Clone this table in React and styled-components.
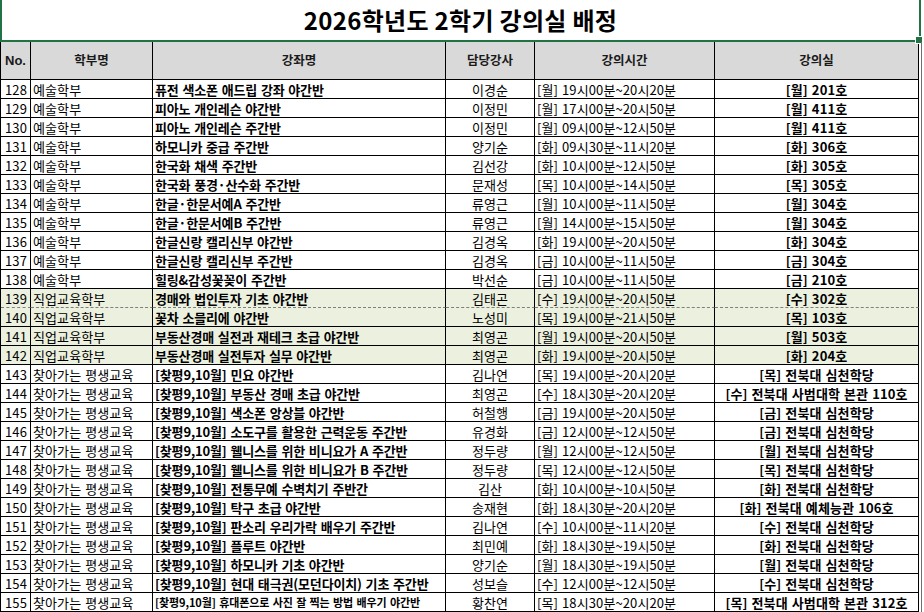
import React from "react";
import styled, { createGlobalStyle } from "styled-components";

const GlobalStyle = createGlobalStyle`
  html, body {
    margin: 0;
    padding: 0;
    background: #ffffff;
  }
  body {
    font-family: "Noto Sans CJK KR", "Noto Sans", sans-serif;
    color: #000000;
  }
`;

// Style
const Sheet = styled.div`
  width: 924px;
  height: 612px;
  overflow: hidden;
  display: flex;
  flex-direction: column;
  position: relative;
  background: #ffffff;
`;

const TitleCell = styled.div`
  width: 921px;
  height: 42px;
  box-sizing: border-box;
  border-left: 2px solid #217346;
  border-right: 2px solid #217346;
  border-bottom: 2px solid #217346;
  display: flex;
  align-items: center;
  justify-content: center;
  position: relative;
`;

const Title = styled.h1`
  margin: 0;
  font-size: 24px;
  font-weight: 700;
  letter-spacing: 0.3px;
  line-height: 1;
`;

const FillHandle = styled.div`
  position: absolute;
  right: -4px;
  bottom: -4px;
  width: 6px;
  height: 6px;
  background: #217346;
  border: 1px solid #ffffff;
`;

const Row = styled.div`
  display: grid;
  grid-template-columns: 30px 122px 293px 89px 180px 204px;
  width: 919px;
  height: ${(p) => (p.$head ? "38px" : "19px")};
  box-sizing: border-box;
  border-left: 1px solid #000000;
  background: ${(p) => (p.$head ? "#d9d9d9" : p.$green ? "#ebf1de" : "#ffffff")};
`;

const Cell = styled.div`
  box-sizing: border-box;
  border-right: 1px solid #000000;
  border-bottom: 1px ${(p) => (p.$dashed ? "dashed #7f7f7f" : "solid #000000")};
  display: flex;
  align-items: center;
  justify-content: ${(p) =>
    p.$align === "right" ? "flex-end" : p.$align === "center" ? "center" : "flex-start"};
  padding: ${(p) => (p.$align === "right" ? "0 3px 0 0" : p.$align === "center" ? "0" : "0 0 0 2px")};
  font-size: 13px;
  font-weight: ${(p) => (p.$bold ? 700 : 400)};
  letter-spacing: 0.1px;
  word-spacing: 1px;
  white-space: nowrap;
  overflow: hidden;
  line-height: 1;
`;

const CourseCell = styled(Cell)`
  font-size: ${(p) => (p.$small ? "11px" : "13px")};
  font-weight: 700;
  letter-spacing: ${(p) => (p.$small ? "-0.1px" : "-0.15px")};
`;

const HeadCell = styled(Cell)`
  font-size: 12.5px;
  font-weight: 700;
  letter-spacing: 0;
  color: #1a1a1a;
`;

const NoLabel = styled.span`
  font-family: "Liberation Sans", Arial, sans-serif;
  font-size: 13px;
`;

const RightEdge = styled.div`
  position: absolute;
  left: 921px;
  top: 42px;
  width: 1px;
  bottom: 0;
  background: #6f6f6f;
`;

const data = [
  [128, "예술학부", "퓨전 색소폰 애드립 강좌 야간반", "이경순", "[월] 19시00분~20시20분", "[월] 201호"],
  [129, "예술학부", "피아노 개인레슨 야간반", "이정민", "[월] 17시00분~20시50분", "[월] 411호"],
  [130, "예술학부", "피아노 개인레슨 주간반", "이정민", "[월] 09시00분~12시50분", "[월] 411호"],
  [131, "예술학부", "하모니카 중급 주간반", "양기순", "[화] 09시30분~11시20분", "[화] 306호"],
  [132, "예술학부", "한국화 채색 주간반", "김선강", "[화] 10시00분~12시50분", "[화] 305호"],
  [133, "예술학부", "한국화 풍경·산수화 주간반", "문재성", "[목] 10시00분~14시50분", "[목] 305호"],
  [134, "예술학부", "한글·한문서예A 주간반", "류영근", "[월] 10시00분~11시50분", "[월] 304호"],
  [135, "예술학부", "한글·한문서예B 주간반", "류영근", "[월] 14시00분~15시50분", "[월] 304호"],
  [136, "예술학부", "한글신랑 캘리신부 야간반", "김경옥", "[화] 19시00분~20시50분", "[화] 304호"],
  [137, "예술학부", "한글신랑 캘리신부 주간반", "김경옥", "[금] 10시00분~11시50분", "[금] 304호"],
  [138, "예술학부", "힐링&감성꽃꽂이 주간반", "박선순", "[금] 10시00분~11시50분", "[금] 210호"],
  [139, "직업교육학부", "경매와 법인투자 기초 야간반", "김태곤", "[수] 19시00분~20시50분", "[수] 302호"],
  [140, "직업교육학부", "꽃차 소믈리에 야간반", "노성미", "[목] 19시00분~21시50분", "[목] 103호"],
  [141, "직업교육학부", "부동산경매 실전과 재테크 초급 야간반", "최영곤", "[월] 19시00분~20시50분", "[월] 503호"],
  [142, "직업교육학부", "부동산경매 실전투자 실무 야간반", "최영곤", "[화] 19시00분~20시50분", "[화] 204호"],
  [143, "찾아가는 평생교육", "[찾평9,10월] 민요 야간반", "김나연", "[목] 19시00분~20시20분", "[목] 전북대 심천학당"],
  [144, "찾아가는 평생교육", "[찾평9,10월] 부동산 경매 초급 야간반", "최영곤", "[수] 18시30분~20시20분", "[수] 전북대 사범대학 본관 110호"],
  [145, "찾아가는 평생교육", "[찾평9,10월] 색소폰 앙상블 야간반", "허철행", "[금] 19시00분~20시50분", "[금] 전북대 심천학당"],
  [146, "찾아가는 평생교육", "[찾평9,10월] 소도구를 활용한 근력운동 주간반", "유경화", "[금] 12시00분~12시50분", "[금] 전북대 심천학당"],
  [147, "찾아가는 평생교육", "[찾평9,10월] 웰니스를 위한 비니요가 A 주간반", "정두량", "[월] 12시00분~12시50분", "[월] 전북대 심천학당"],
  [148, "찾아가는 평생교육", "[찾평9,10월] 웰니스를 위한 비니요가 B 주간반", "정두량", "[목] 12시00분~12시50분", "[목] 전북대 심천학당"],
  [149, "찾아가는 평생교육", "[찾평9,10월] 전통무예 수벽치기 주반간", "김산", "[화] 10시00분~10시50분", "[화] 전북대 심천학당"],
  [150, "찾아가는 평생교육", "[찾평9,10월] 탁구 초급 야간반", "송재현", "[화] 18시30분~20시20분", "[화] 전북대 예체능관 106호"],
  [151, "찾아가는 평생교육", "[찾평9,10월] 판소리 우리가락 배우기 주간반", "김나연", "[수] 10시00분~11시20분", "[수] 전북대 심천학당"],
  [152, "찾아가는 평생교육", "[찾평9,10월] 플루트 야간반", "최민예", "[화] 18시30분~19시50분", "[화] 전북대 심천학당"],
  [153, "찾아가는 평생교육", "[찾평9,10월] 하모니카 기초 야간반", "양기순", "[월] 18시30분~19시50분", "[월] 전북대 심천학당"],
  [154, "찾아가는 평생교육", "[찾평9,10월] 현대 태극권(모던다이치) 기초 주간반", "성보슬", "[수] 12시00분~12시50분", "[수] 전북대 심천학당"],
  [155, "찾아가는 평생교육", "[찾평9,10월] 휴대폰으로 사진 잘 찍는 방법 배우기 야간반", "황찬연", "[목] 18시30분~20시20분", "[목] 전북대 사범대학 본관 312호"],
];

export default function App() {
  return (
    <>
      <GlobalStyle />
      <Sheet>
        <TitleCell>
          <Title>2026학년도 2학기 강의실 배정</Title>
          <FillHandle />
        </TitleCell>
        <Row $head>
          <HeadCell $align="center">
            <NoLabel>No.</NoLabel>
          </HeadCell>
          <HeadCell $align="center">학부명</HeadCell>
          <HeadCell $align="center">강좌명</HeadCell>
          <HeadCell $align="center">담당강사</HeadCell>
          <HeadCell $align="center">강의시간</HeadCell>
          <HeadCell $align="center">강의실</HeadCell>
        </Row>
        {data.map((r) => {
          const green = r[0] >= 139 && r[0] <= 142;
          const dashed = r[0] === 139;
          return (
            <Row key={r[0]} $green={green}>
              <Cell $align="right" $dashed={dashed}>{r[0]}</Cell>
              <Cell $dashed={dashed}>{r[1]}</Cell>
              <CourseCell $small={r[0] === 155} $dashed={dashed}>{r[2]}</CourseCell>
              <Cell $align="center" $dashed={dashed}>{r[3]}</Cell>
              <Cell $dashed={dashed}>{r[4]}</Cell>
              <Cell $align="center" $bold $dashed={dashed}>{r[5]}</Cell>
            </Row>
          );
        })}
        <RightEdge />
      </Sheet>
    </>
  );
}
